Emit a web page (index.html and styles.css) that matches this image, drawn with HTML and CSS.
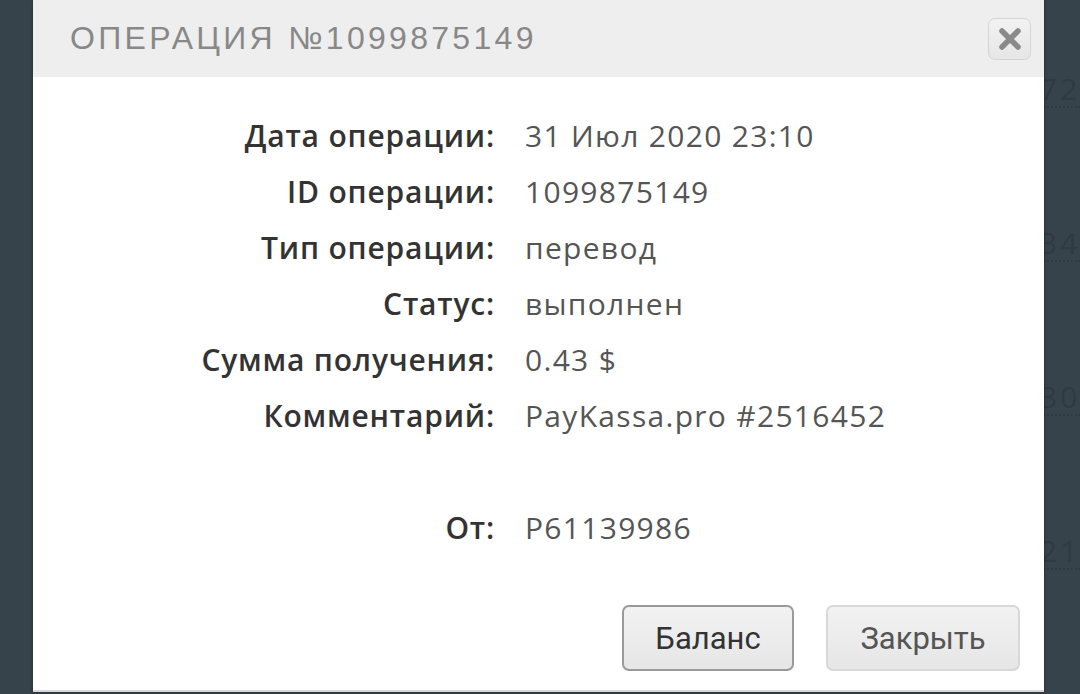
FILE: index.html
```html
<!DOCTYPE html>
<html lang="ru">
<head>
  <meta charset="UTF-8">
  <meta name="viewport" content="width=device-width, initial-scale=1.0">
  <title>Операция №1099875149</title>
  <link rel="stylesheet" href="styles.css">
</head>
<body>
  <!-- Page behind the overlay -->
  <div class="page">
    <div class="page-row"><span class="page-num">72</span></div>
    <div class="page-row"><span class="page-num">34</span></div>
    <div class="page-row"><span class="page-num">30</span></div>
    <div class="page-row"><span class="page-num">21</span></div>
  </div>

  <!-- Operation modal -->
  <div class="modal">
    <div class="modal-header">
      <h2 class="modal-title">ОПЕРАЦИЯ №1099875149</h2>
      <button class="modal-close" aria-label="Закрыть">
        <svg width="24" height="24" viewBox="0 0 24 24">
          <path d="M4 4 L20 20 M20 4 L4 20" stroke="#8a8a8a" stroke-width="5.5" stroke-linecap="round"/>
        </svg>
      </button>
    </div>

    <div class="modal-body">
      <dl class="details">
        <dt>Дата операции:</dt><dd>31 Июл 2020 23:10</dd>
        <dt>ID операции:</dt><dd>1099875149</dd>
        <dt>Тип операции:</dt><dd>перевод</dd>
        <dt>Статус:</dt><dd>выполнен</dd>
        <dt>Сумма получения:</dt><dd>0.43 $</dd>
        <dt>Комментарий:</dt><dd>PayKassa.pro #2516452</dd>
        <dt class="spacer"></dt><dd class="spacer"></dd>
        <dt>От:</dt><dd>P61139986</dd>
      </dl>

      <div class="modal-actions">
        <button class="btn btn-primary">Баланс</button>
        <button class="btn btn-close">Закрыть</button>
      </div>
    </div>
  </div>
</body>
</html>
```

FILE: styles.css
```css
/* Base */
body {
  margin: 0;
  height: 694px;
  overflow: hidden;
  background-color: #36434b;
  font-family: "Open Sans", Arial, sans-serif;
}

/* Faint page content behind the overlay */
.page {
  display: flex;
  flex-direction: column;
  align-items: flex-end;
  padding-top: 72px;
  gap: 118px;
}

.page-row {
  width: 40px;
  border-bottom: 2px dotted #2f3a41;
}

.page-num {
  display: block;
  font-size: 30px;
  line-height: 34px;
  letter-spacing: 3px;
  color: #2f3a41;
}

/* Modal */
.modal {
  position: absolute;
  top: 0;
  left: 33px;
  width: 1011px;
  height: 692px;
  background-color: #ffffff;
  box-shadow: 0 0 3px rgba(0, 0, 0, 0.45);
  border-bottom: 2px solid #d8d8d8;
  box-sizing: border-box;
}

.modal-header {
  display: flex;
  align-items: center;
  justify-content: space-between;
  height: 77px;
  padding: 0 13px 0 37px;
  background-color: #eeeeee;
}

.modal-title {
  margin: 0;
  font-family: "Liberation Sans", Arial, sans-serif;
  font-weight: normal;
  font-size: 32px;
  letter-spacing: 3.3px;
  color: #888888;
}

.modal-close {
  display: flex;
  align-items: center;
  justify-content: center;
  width: 43px;
  height: 42px;
  padding: 0;
  border: 1px solid #d4d4d4;
  border-radius: 7px;
  background: linear-gradient(#f2f2f2, #e6e6e6);
}

.modal-body {
  padding-top: 31px;
}

/* Details list */
.details {
  display: grid;
  grid-template-columns: 462px 1fr;
  column-gap: 30px;
  margin: 0;
  font-size: 30px;
  line-height: 56px;
}

.details dt {
  text-align: right;
  font-weight: 600;
  letter-spacing: 0.8px;
  color: #333333;
}

.details dd {
  margin: 0;
  letter-spacing: 1.3px;
  color: #555555;
}

.details .spacer {
  height: 56px;
}

/* Buttons */
.modal-actions {
  display: flex;
  justify-content: flex-end;
  gap: 32px;
  margin-top: 49px;
  padding-right: 24px;
}

.btn {
  height: 66px;
  padding: 0;
  border: 2px solid #d8d8d8;
  border-radius: 7px;
  background: linear-gradient(#f2f2f2, #e6e6e6);
  font-family: Roboto, Arial, sans-serif;
  font-size: 31px;
  color: #555555;
}

.btn-primary {
  width: 172px;
  border-color: #9a9a9a;
  color: #333333;
}

.btn-close {
  width: 194px;
}
```
